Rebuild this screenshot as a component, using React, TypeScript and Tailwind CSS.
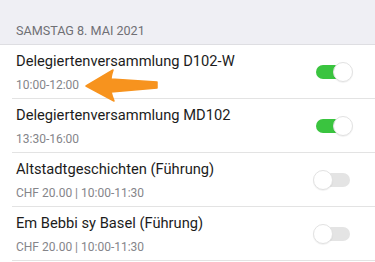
import { useState } from 'react'

type Item = { title: string; sub: string; on: boolean }

const ITEMS: Item[] = [
  { title: 'Delegiertenversammlung D102-W', sub: '10:00-12:00', on: true },
  { title: 'Delegiertenversammlung MD102', sub: '13:30-16:00', on: true },
  { title: 'Altstadtgeschichten (Führung)', sub: 'CHF 20.00 | 10:00-11:30', on: false },
  { title: 'Em Bebbi sy Basel (Führung)', sub: 'CHF 20.00 | 10:00-11:30', on: false },
]

function Toggle({ on, onChange }: { on: boolean; onChange: () => void }) {
  return (
    <button onClick={onChange} className="relative w-[40px] h-[20px] flex items-center">
      <span className={`absolute left-[3px] right-[3px] h-[14px] rounded-full ${on ? 'bg-[#3ac43f]' : 'bg-[#e4e4e4]'}`} />
      <span
        className={`absolute top-0 w-[20px] h-[20px] rounded-full bg-white border border-[#e2e2e2] shadow-[0_1px_1px_rgba(0,0,0,0.06)] ${on ? 'right-0' : 'left-0'}`}
      />
    </button>
  )
}

export default function App() {
  const [items, setItems] = useState(ITEMS)

  const toggle = (i: number) => {
    setItems(items.map((it, idx) => (idx === i ? { ...it, on: !it.on } : it)))
  }

  return (
    <div className="relative w-[375px] h-[262px] overflow-hidden bg-white" style={{ fontFamily: 'Roboto, "Noto Sans", sans-serif' }}>
      <div className="h-[45px] bg-[#efeff4] border-b border-[#dedee2] flex items-end px-4 pb-[4px]">
        <span className="text-[12.6px] leading-[18px] text-[#707075]">SAMSTAG 8. MAI 2021</span>
      </div>
      <div className="pl-3">
        {items.map((it, i) => (
          <div key={i} className="h-[54px] border-b border-[#e3e3e3] flex items-center pr-[22px]">
            <div className="flex-1 pl-1 pt-[1px]">
              <div className="text-[14.7px] leading-[20px] text-[#1c1c1c]">{it.title}</div>
              <div className="mt-[6px] text-[12px] leading-[16px] text-[#85858a]">{it.sub}</div>
            </div>
            <Toggle on={it.on} onChange={() => toggle(i)} />
          </div>
        ))}
      </div>
      {/* highlight arrow */}
      <svg className="absolute left-[84px] top-[68px]" width="76" height="36" viewBox="0 0 76 36">
        <path
          d="M2 18 L29 2 Q27 8 27 11 L73 14 L73 20 L27 24 Q28 28 30 33 Z"
          fill="#f7931e"
          stroke="#f7931e"
          strokeWidth="1.5"
          strokeLinejoin="round"
        />
      </svg>
    </div>
  )
}
